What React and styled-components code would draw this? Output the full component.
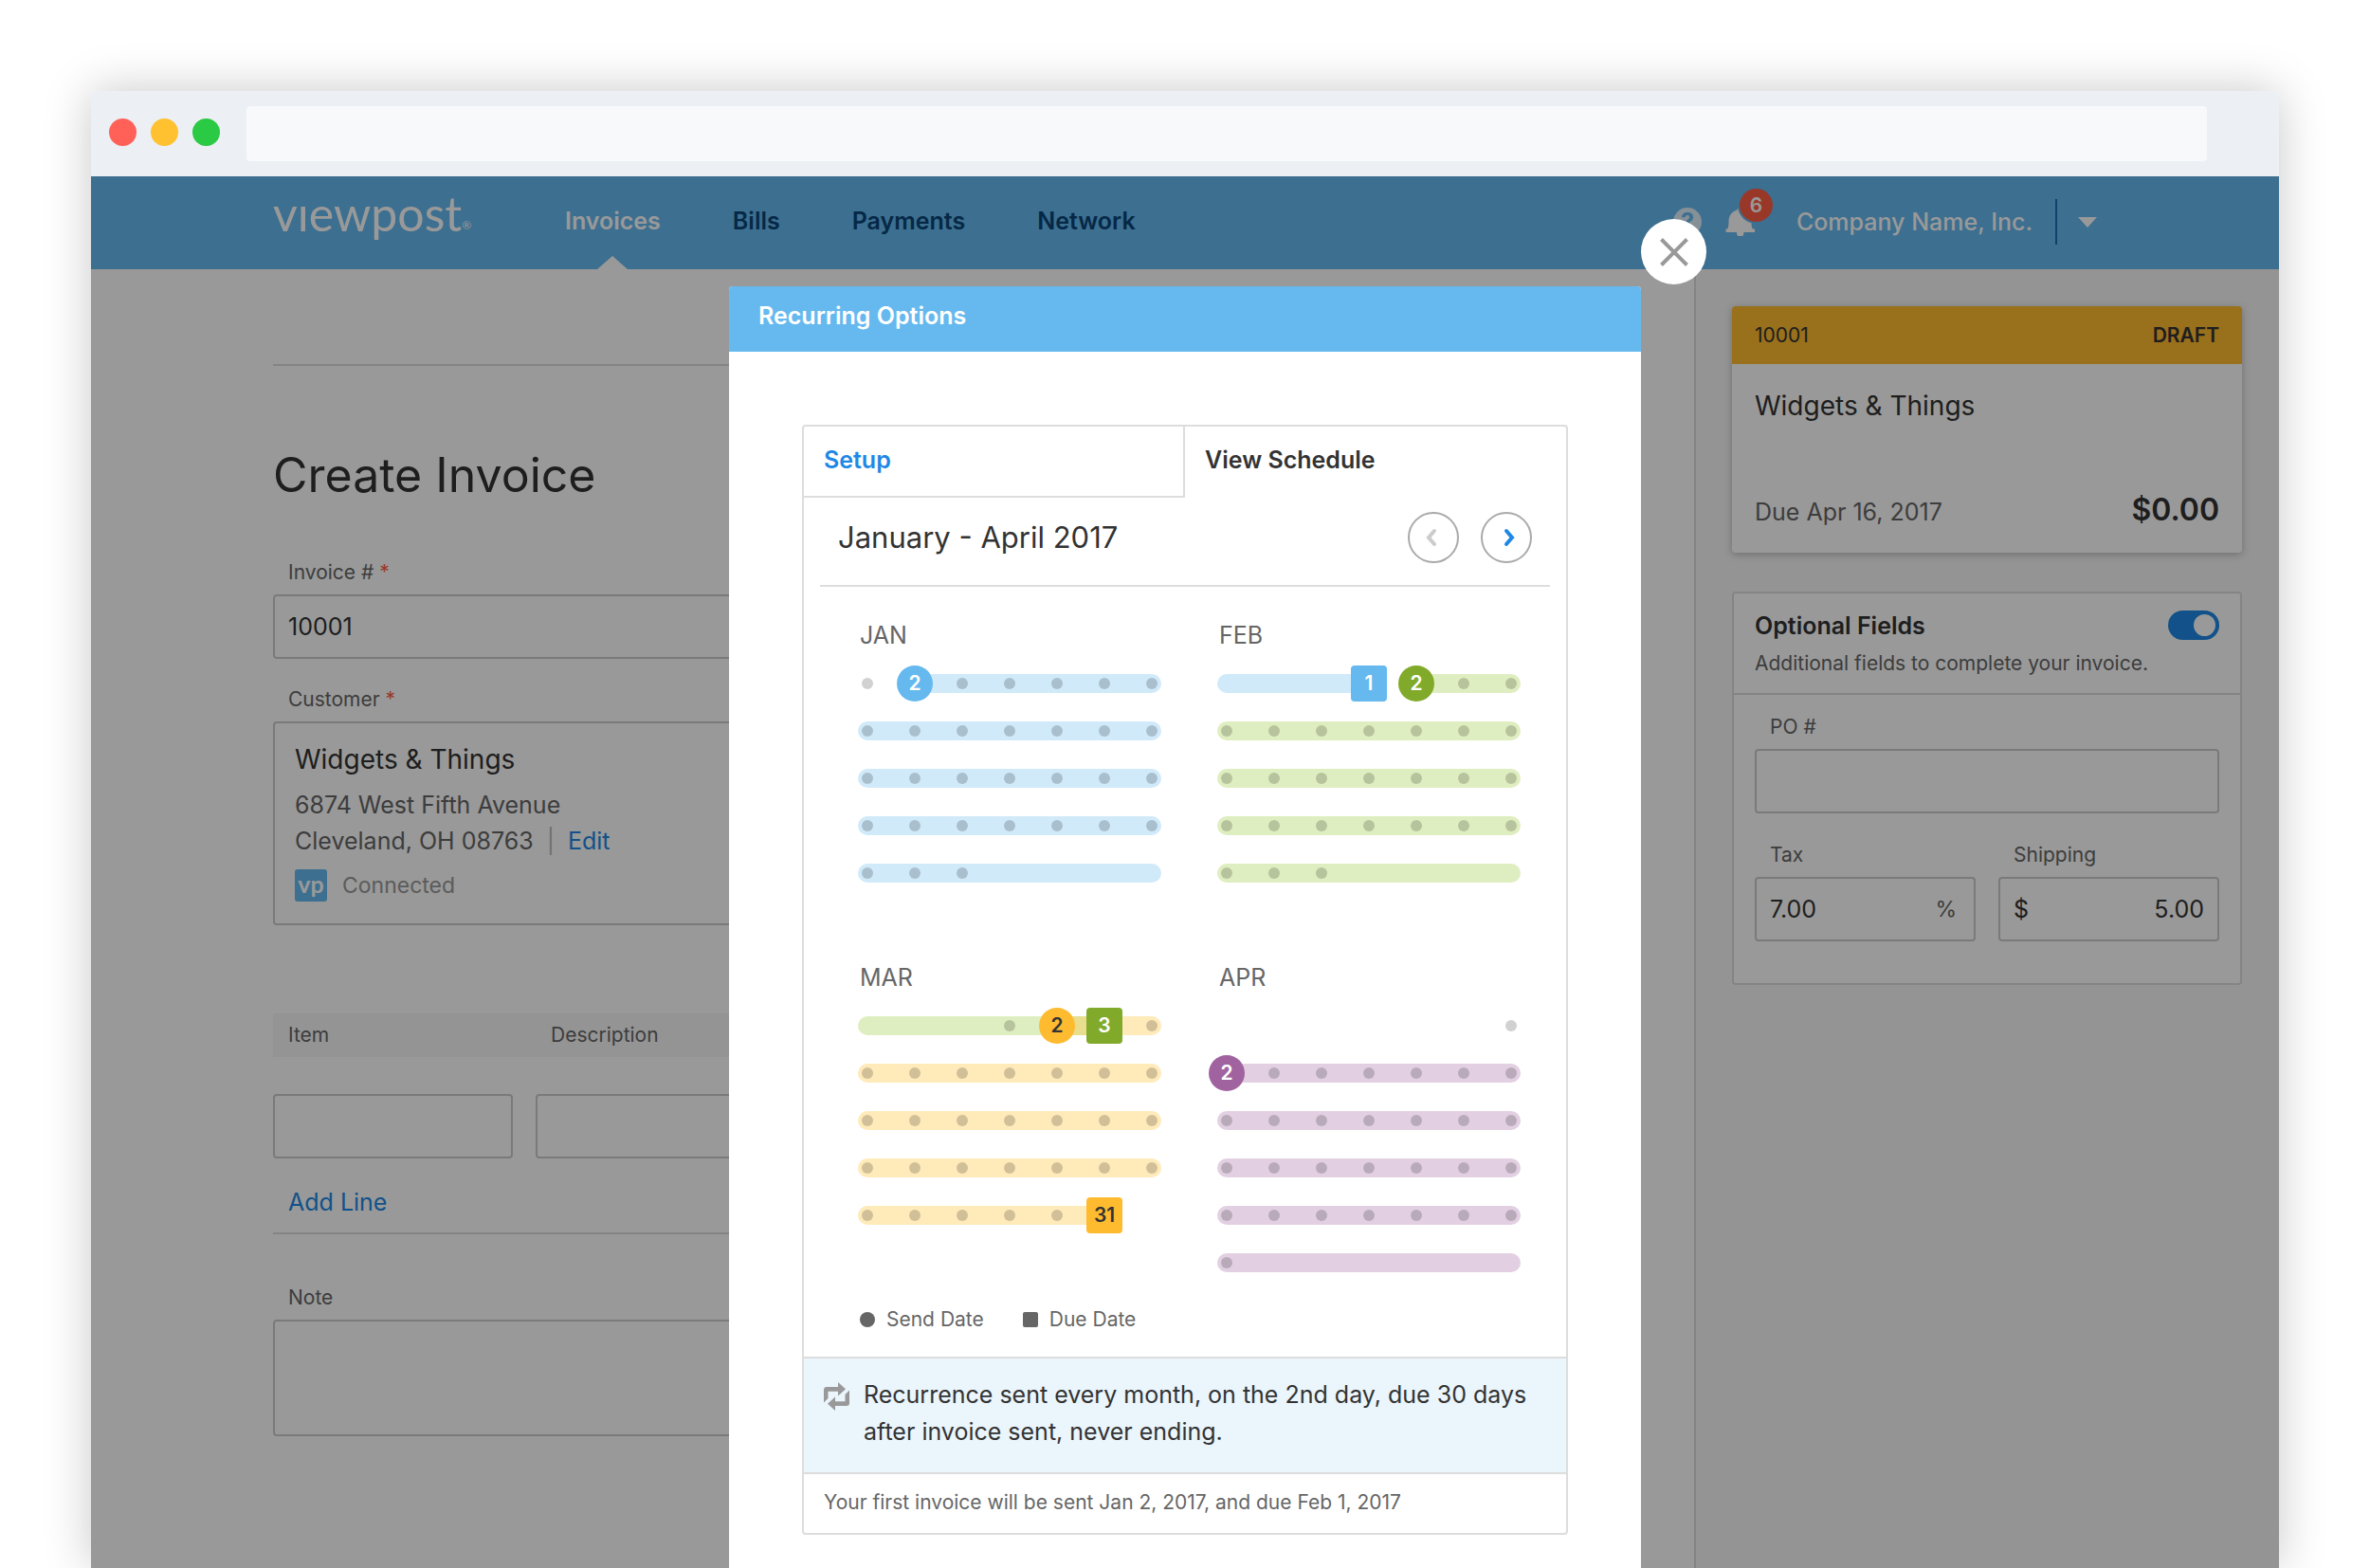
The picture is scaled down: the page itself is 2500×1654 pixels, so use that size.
import React from "react";
import styled, { createGlobalStyle } from "styled-components";

const MONTHS = [
  {
    name: "JAN",
    weeks: [
      { bars: [["blue", 2, 7]], marks: [["blue", "send", 2, 2]], dots: [1, 3, 4, 5, 6, 7] },
      { bars: [["blue", 1, 7]], dots: [1, 2, 3, 4, 5, 6, 7] },
      { bars: [["blue", 1, 7]], dots: [1, 2, 3, 4, 5, 6, 7] },
      { bars: [["blue", 1, 7]], dots: [1, 2, 3, 4, 5, 6, 7] },
      { bars: [["blue", 1, 7]], dots: [1, 2, 3] },
    ],
  },
  {
    name: "FEB",
    weeks: [
      {
        bars: [["blue", 1, 4], ["green", 5, 7]],
        marks: [["blue", "due", 4, 1], ["green", "send", 5, 2]],
        dots: [6, 7],
      },
      { bars: [["green", 1, 7]], dots: [1, 2, 3, 4, 5, 6, 7] },
      { bars: [["green", 1, 7]], dots: [1, 2, 3, 4, 5, 6, 7] },
      { bars: [["green", 1, 7]], dots: [1, 2, 3, 4, 5, 6, 7] },
      { bars: [["green", 1, 7]], dots: [1, 2, 3] },
    ],
  },
  {
    name: "MAR",
    weeks: [
      {
        bars: [["green", 1, 6], ["yellow", 5, 7]],
        marks: [["yellow", "send", 5, 2], ["green", "due", 6, 3]],
        dots: [4, 7],
      },
      { bars: [["yellow", 1, 7]], dots: [1, 2, 3, 4, 5, 6, 7] },
      { bars: [["yellow", 1, 7]], dots: [1, 2, 3, 4, 5, 6, 7] },
      { bars: [["yellow", 1, 7]], dots: [1, 2, 3, 4, 5, 6, 7] },
      { bars: [["yellow", 1, 6]], marks: [["yellow", "due", 6, 31]], dots: [1, 2, 3, 4, 5] },
    ],
  },
  {
    name: "APR",
    weeks: [
      { dots: [7] },
      { bars: [["purple", 1, 7]], marks: [["purple", "send", 1, 2]], dots: [2, 3, 4, 5, 6, 7] },
      { bars: [["purple", 1, 7]], dots: [1, 2, 3, 4, 5, 6, 7] },
      { bars: [["purple", 1, 7]], dots: [1, 2, 3, 4, 5, 6, 7] },
      { bars: [["purple", 1, 7]], dots: [1, 2, 3, 4, 5, 6, 7] },
      { bars: [["purple", 1, 7]], dots: [1] },
    ],
  },
];

const BAR_COLORS = {
  blue: "rgba(101, 185, 240, 0.3)",
  green: "rgba(149, 200, 48, 0.3)",
  yellow: "rgba(255, 184, 26, 0.3)",
  purple: "rgba(160, 99, 160, 0.3)",
};

const MARK_COLORS = {
  blue: "#65b9ee",
  green: "#81aa2b",
  yellow: "#ffbb30",
  purple: "#a063a0",
};

const Month = ({ name, weeks }) => (
  <section>
    <MonthName>{name}</MonthName>
    <Weeks>
      {weeks.map(({ bars = [], marks = [], dots }, index) => (
        <Week key={index}>
          {bars.map(([color, from, to]) => (
            <Bar key={color} $color={color} $from={from} $to={to} />
          ))}
          {dots.map((day) => (
            <Dot key={day} $day={day} />
          ))}
          {marks.map(([color, kind, day, label]) => (
            <Mark key={day} $color={color} $kind={kind} $day={day}>
              {label}
            </Mark>
          ))}
        </Week>
      ))}
    </Weeks>
  </section>
);

const TopBar = () => (
  <Header>
    <Logo href="#home" aria-label="viewpost">
      vıewpost<Registered>®</Registered>
    </Logo>
    <Nav>
      <NavItem href="#invoices" $active>
        Invoices
      </NavItem>
      <NavItem href="#bills">Bills</NavItem>
      <NavItem href="#payments">Payments</NavItem>
      <NavItem href="#network">Network</NavItem>
    </Nav>
    <Account>
      <HelpButton aria-label="Help">?</HelpButton>
      <BellButton aria-label="Notifications">
        <svg width="32" height="30" viewBox="0 0 32 30" fill="#fff">
          <path d="M13.5 0l2 2.500C23 3.200 27.500 8 27.500 14.500c0 3.500.2 5.500 1.200 8H31V26H.5v-3.500h1.800c1-2.500 1.200-4.500 1.200-8C3.500 8.500 7 4 12 2.800z" />
          <path d="M12 25.500h7.500V27a3.700 3.500 0 0 1-7.500 0z" />
        </svg>
        <Badge>6</Badge>
      </BellButton>
      <Company>Company Name, Inc.</Company>
      <MenuButton aria-label="Account menu">
        <svg width="20" height="11" viewBox="0 0 20 11" fill="#fff">
          <path d="M0 0h20L10 11z" />
        </svg>
      </MenuButton>
    </Account>
  </Header>
);

const InvoiceForm = () => (
  <Main>
    <Rule />
    <Title>Create Invoice</Title>
    <Label htmlFor="invoice-number">
      Invoice # <Required>*</Required>
    </Label>
    <Input id="invoice-number" defaultValue="10001" />
    <CustomerLabel>
      Customer <Required>*</Required>
    </CustomerLabel>
    <CustomerBox>
      <CustomerName>Widgets &amp; Things</CustomerName>
      <Address>
        6874 West Fifth Avenue
        <br />
        Cleveland, OH 08763
        <Separator>|</Separator>
        <TextLink href="#edit">Edit</TextLink>
      </Address>
      <Connection>
        <VpIcon>vp</VpIcon>
        Connected
      </Connection>
    </CustomerBox>
    <Items>
      <thead>
        <tr>
          <ItemHead $width="277px">Item</ItemHead>
          <ItemHead>Description</ItemHead>
        </tr>
      </thead>
      <tbody>
        <tr>
          <ItemCell $gap="24px">
            <Input aria-label="Item" />
          </ItemCell>
          <ItemCell>
            <Input aria-label="Description" />
          </ItemCell>
        </tr>
      </tbody>
    </Items>
    <AddLine>Add Line</AddLine>
    <Rule />
    <NoteLabel htmlFor="note">Note</NoteLabel>
    <Note id="note" />
  </Main>
);

const SidePanel = () => (
  <Sidebar>
    <Summary>
      <SummaryHead>
        <span>10001</span>
        <strong>DRAFT</strong>
      </SummaryHead>
      <SummaryBody>
        <CustomerName>Widgets &amp; Things</CustomerName>
        <SummaryTotal>
          <span>Due Apr 16, 2017</span>
          <Amount>$0.00</Amount>
        </SummaryTotal>
      </SummaryBody>
    </Summary>
    <Options>
      <OptionsHead>
        <div>
          <OptionsTitle id="optional">Optional Fields</OptionsTitle>
          <OptionsText>Additional fields to complete your invoice.</OptionsText>
        </div>
        <Toggle type="checkbox" role="switch" aria-labelledby="optional" defaultChecked />
      </OptionsHead>
      <OptionsBody>
        <Label htmlFor="po">PO #</Label>
        <Input id="po" />
        <Pair>
          <div>
            <Label htmlFor="tax">Tax</Label>
            <Affixed>
              <BareInput id="tax" defaultValue="7.00" />
              <Percent>%</Percent>
            </Affixed>
          </div>
          <div>
            <Label htmlFor="shipping">Shipping</Label>
            <Affixed>
              <span>$</span>
              <BareInput id="shipping" defaultValue="5.00" $right />
            </Affixed>
          </div>
        </Pair>
      </OptionsBody>
    </Options>
  </Sidebar>
);

const RecurringDialog = () => (
  <Overlay>
    <Dialog role="dialog" aria-labelledby="dialog-title">
      <CloseButton aria-label="Close">
        <svg width="30" height="30" viewBox="0 0 30 30" stroke="#999" strokeWidth="4">
          <path d="M1.500 1.500l27 27M28.500 1.500l-27 27" />
        </svg>
      </CloseButton>
      <DialogTitle id="dialog-title">Recurring Options</DialogTitle>
      <DialogBody>
        <Panel>
          <Tabs role="tablist">
            <Tab role="tab" aria-selected="false">
              Setup
            </Tab>
            <Tab role="tab" aria-selected="true" $active>
              View Schedule
            </Tab>
          </Tabs>
          <Period>
            <PeriodTitle>January - April 2017</PeriodTitle>
            <RoundButton aria-label="Previous" disabled>
              <Chevron viewBox="0 0 20 20" stroke="#ccc">
                <path d="M11 3L5 10l6 7" />
              </Chevron>
            </RoundButton>
            <RoundButton aria-label="Next">
              <Chevron viewBox="0 0 20 20" stroke="#1e88e5">
                <path d="M10 3l6 7-6 7" />
              </Chevron>
            </RoundButton>
          </Period>
          <Months>
            {MONTHS.map((month) => (
              <Month key={month.name} {...month} />
            ))}
          </Months>
          <Legend>
            <LegendItem>
              <LegendShape $round />
              Send Date
            </LegendItem>
            <LegendItem>
              <LegendShape />
              Due Date
            </LegendItem>
          </Legend>
          <Recurrence>
            <RepeatIcon viewBox="0 0 27 30" fill="#999">
              <path d="M0 21.500V8a3 3 0 0 1 3-3h12V0l8 7.200-8 7.200V9.800H4.500V17z" />
              <path d="M27 8.500V22a3 3 0 0 1-3 3H12v5l-8-7.200 8-7.200v4.600h10.500V13z" />
            </RepeatIcon>
            <p>Recurrence sent every month, on the 2nd day, due 30 days after invoice sent, never ending.</p>
          </Recurrence>
          <FirstInvoice>Your first invoice will be sent Jan 2, 2017, and due Feb 1, 2017</FirstInvoice>
        </Panel>
      </DialogBody>
    </Dialog>
  </Overlay>
);

const App = () => (
  <>
    <GlobalStyle />
    <Page>
      <Browser>
        <Chrome>
          <Lights>
            <Light $color="#ff6159" />
            <Light $color="#ffc12f" />
            <Light $color="#2aca44" />
          </Lights>
          <AddressBar aria-label="Address" />
        </Chrome>
        <Screen>
          <TopBar />
          <Columns>
            <InvoiceForm />
            <SidePanel />
          </Columns>
          <RecurringDialog />
        </Screen>
      </Browser>
    </Page>
  </>
);

const GlobalStyle = createGlobalStyle`
  * {
    box-sizing: border-box;
  }
  body {
    margin: 0;
    background: #fff;
    color: #333;
    font-family: Inter, "Liberation Sans", sans-serif;
    font-size: 25px;
    line-height: 38px;
  }
  h1, h2, h3, p {
    margin: 0;
    font-weight: 400;
  }
  button {
    padding: 0;
    border: 0;
    background: none;
    font: inherit;
    color: inherit;
  }
  a {
    text-decoration: none;
  }
  svg {
    display: block;
  }
`;

const Page = styled.div`
  display: flex;
  min-height: 100vh;
  padding: 96px 96px 0;
  overflow: hidden;
`;

const Browser = styled.div`
  flex: 1;
  display: flex;
  flex-direction: column;
  border-radius: 6px 6px 0 0;
  box-shadow: 0 0 50px rgba(0, 0, 0, 0.22);
`;

const Chrome = styled.div`
  display: flex;
  align-items: center;
  gap: 28px;
  height: 90px;
  padding: 0 76px 0 19px;
  border-radius: 6px 6px 0 0;
  background: #eceff4;
`;

const Lights = styled.div`
  display: flex;
  gap: 15px;
  padding-bottom: 4px;
`;

const Light = styled.span`
  width: 29px;
  height: 29px;
  border-radius: 50%;
  background: ${(p) => p.$color};
`;

const AddressBar = styled.input`
  flex: 1;
  height: 58px;
  border: 0;
  border-radius: 4px;
  background: #f8f9fb;
`;

const Screen = styled.div`
  position: relative;
  flex: 1;
  display: flex;
  flex-direction: column;
  background: #fff;
`;

const Header = styled.header`
  display: flex;
  align-items: stretch;
  height: 98px;
  padding: 0 192px;
  background: #65b9f0;
`;

const Logo = styled.a`
  display: flex;
  width: 308px;
  color: #fff;
  font-family: Lato, sans-serif;
  font-size: 50px;
  line-height: 78px;
`;

const Registered = styled.span`
  font-size: 12px;
  line-height: 104px;
`;

const Nav = styled.nav`
  flex: 1;
  display: flex;
  gap: 76px;
`;

const NavItem = styled.a`
  display: flex;
  flex-direction: column;
  align-items: center;
  color: ${(p) => (p.$active ? "#fff" : "#0a4375")};
  font-weight: 600;
  line-height: 94px;

  &::after {
    content: "";
    margin-top: -10px;
    border: solid transparent;
    border-width: 0 16px 14px;
    border-bottom-color: ${(p) => (p.$active ? "#fff" : "transparent")};
  }
`;

const Account = styled.div`
  display: flex;
  align-items: center;
  padding-bottom: 2px;
`;

const HelpButton = styled.button`
  width: 30px;
  height: 30px;
  margin-right: 25px;
  border-radius: 50%;
  background: #e0f1fc;
  color: #65b9f0;
  font-size: 25px;
  font-weight: 700;
  line-height: 30px;
`;

const BellButton = styled.button`
  position: relative;
  margin-right: 43px;
`;

const Badge = styled.span`
  position: absolute;
  left: 15px;
  top: -20px;
  width: 35px;
  height: 35px;
  border-radius: 50%;
  background: #ff5c43;
  box-shadow: 0 0 0 2px #65b9f0;
  color: #fff;
  font-size: 21px;
  font-weight: 600;
  line-height: 35px;
`;

const Company = styled.span`
  padding-right: 24px;
  border-right: 2px solid #1e6db0;
  color: #fff;
  font-weight: 500;
  line-height: 48px;
`;

const MenuButton = styled.button`
  margin-left: 22px;
`;

const Columns = styled.div`
  flex: 1;
  display: flex;
`;

const Main = styled.main`
  flex: 1;
  padding: 100px 56px 100px 192px;
`;

const Rule = styled.hr`
  height: 2px;
  margin: 0;
  border: 0;
  background: #ddd;
`;

const Title = styled.h1`
  margin: 85px 0 58px;
  font-size: 50px;
  line-height: 60px;
`;

const Label = styled.label`
  display: block;
  margin-bottom: 8px;
  padding-left: 16px;
  color: #666;
  font-size: 21px;
  line-height: 30px;
`;

const CustomerLabel = styled(Label).attrs({ as: "div" })`
  margin-top: 28px;
`;

const NoteLabel = styled(Label)`
  margin-top: 52px;
`;

const Required = styled.span`
  color: #ff5c43;
`;

const Input = styled.input`
  display: block;
  width: 100%;
  height: 68px;
  padding: 0 14px;
  border: 2px solid #ccc;
  border-radius: 4px;
  background: #fff;
  color: #333;
  font: inherit;
`;

const Note = styled(Input).attrs({ as: "textarea" })`
  height: 123px;
  resize: none;
`;

const CustomerBox = styled.div`
  padding: 20px 21px 23px;
  border: 2px solid #ccc;
  border-radius: 4px;
`;

const CustomerName = styled.p`
  font-size: 28px;
  line-height: 36px;
`;

const Address = styled.p`
  margin: 11px 0;
  color: #666;
`;

const Separator = styled.span`
  margin: 0 14px;
  color: #bbb;
`;

const TextLink = styled.a`
  color: #1e88e5;
`;

const Connection = styled.div`
  display: flex;
  align-items: center;
  gap: 16px;
  color: #999;
  font-size: 23px;
  line-height: 34px;
`;

const VpIcon = styled.span`
  width: 34px;
  height: 34px;
  border-radius: 3px;
  background: #65b9f0;
  color: #fff;
  font-family: Lato, sans-serif;
  font-size: 25px;
  font-weight: 700;
  line-height: 30px;
  text-align: center;
`;

const Items = styled.table`
  width: 100%;
  margin-top: 93px;
  border-collapse: collapse;
`;

const ItemHead = styled.th`
  width: ${(p) => p.$width || "auto"};
  height: 46px;
  padding: 0 16px;
  background: #f7f7f7;
  color: #666;
  font-size: 21px;
  font-weight: 400;
  line-height: 30px;
  text-align: left;
`;

const ItemCell = styled.td`
  padding: 39px ${(p) => p.$gap || 0} 0 0;
`;

const AddLine = styled.button`
  display: block;
  margin: 27px 0 13px;
  padding-left: 16px;
  color: #1e88e5;
`;

const Sidebar = styled.aside`
  flex: none;
  width: 617px;
  padding: 39px 39px 39px 38px;
  border-left: 2px solid #ddd;
  background: #f7f7f7;
`;

const Summary = styled.section`
  border-radius: 4px;
  background: #fff;
  box-shadow: 0 2px 8px rgba(0, 0, 0, 0.25);
`;

const SummaryHead = styled.div`
  display: flex;
  justify-content: space-between;
  padding: 0 24px;
  border-radius: 4px 4px 0 0;
  background: #ffbb30;
  font-size: 21px;
  line-height: 61px;

  strong {
    font-weight: 600;
  }
`;

const SummaryBody = styled.div`
  display: flex;
  flex-direction: column;
  gap: 73px;
  padding: 26px 24px 24px;
`;

const SummaryTotal = styled.div`
  display: flex;
  align-items: baseline;
  justify-content: space-between;
  color: #666;
  line-height: 38px;
`;

const Amount = styled.strong`
  color: #333;
  font-size: 32px;
  font-weight: 600;
`;

const Options = styled.section`
  margin-top: 41px;
  border: 2px solid #ddd;
  border-radius: 4px;
  background: #fff;
`;

const OptionsHead = styled.div`
  display: flex;
  justify-content: space-between;
  padding: 15px 22px 16px;
  border-bottom: 2px solid #ddd;
`;

const OptionsTitle = styled.h2`
  font-size: 25px;
  font-weight: 600;
`;

const OptionsText = styled.p`
  margin-top: 6px;
  color: #666;
  font-size: 21px;
  line-height: 30px;
`;

const Toggle = styled.input`
  appearance: none;
  flex: none;
  width: 54px;
  height: 31px;
  margin: 3px 0 0;
  padding: 4px;
  border-radius: 16px;
  background: #1e88e5;

  &::before {
    content: "";
    display: block;
    width: 23px;
    height: 23px;
    margin-left: auto;
    border-radius: 50%;
    background: #fff;
  }
`;

const OptionsBody = styled.div`
  padding: 19px 22px 44px;
`;

const Pair = styled.div`
  display: grid;
  grid-template-columns: repeat(2, minmax(0, 1fr));
  gap: 24px;
  margin-top: 29px;
`;

const Affixed = styled.div`
  display: flex;
  align-items: center;
  height: 68px;
  padding: 0 14px;
  border: 2px solid #ccc;
  border-radius: 4px;
`;

const BareInput = styled.input`
  flex: 1;
  min-width: 0;
  padding: 0;
  border: 0;
  background: none;
  color: #333;
  font: inherit;
  text-align: ${(p) => (p.$right ? "right" : "left")};
`;

const Percent = styled.span`
  padding-right: 4px;
  color: #666;
  font-size: 23px;
`;

const Overlay = styled.div`
  position: absolute;
  inset: 0;
  display: flex;
  justify-content: center;
  padding-top: 116px;
  background: rgba(0, 0, 0, 0.4);
`;

const Dialog = styled.div`
  position: relative;
  width: 962px;
  border-radius: 4px 4px 0 0;
  background: #fff;
`;

const CloseButton = styled.button`
  position: absolute;
  left: 100%;
  top: -71px;
  display: flex;
  align-items: center;
  justify-content: center;
  width: 69px;
  height: 69px;
  border-radius: 50%;
  background: #fff;
`;

const DialogTitle = styled.h2`
  padding: 0 31px 6px;
  border-radius: 4px 4px 0 0;
  background: #65b9ee;
  color: #fff;
  font-size: 25px;
  font-weight: 600;
  line-height: 63px;
`;

const DialogBody = styled.div`
  padding: 77px 77px 0;
`;

const Panel = styled.div`
  border: 2px solid #ddd;
  border-radius: 4px;
`;

const Tabs = styled.div`
  display: grid;
  grid-template-columns: 1fr 1fr;
`;

const Tab = styled.button`
  padding: 16px 21px 19px;
  border: solid ${(p) => (p.$active ? "transparent" : "#ddd")};
  border-width: 0 2px 2px 0;
  color: ${(p) => (p.$active ? "#333" : "#1e88e5")};
  font-weight: 600;
  text-align: left;
`;

const Period = styled.div`
  display: flex;
  align-items: center;
  gap: 23px;
  margin: 0 17px;
  padding: 15px 19px 23px;
  border-bottom: 2px solid #ddd;
`;

const PeriodTitle = styled.h3`
  flex: 1;
  font-size: 31px;
`;

const RoundButton = styled.button`
  display: flex;
  align-items: center;
  justify-content: center;
  width: 54px;
  height: 54px;
  border: 2px solid #aaa;
  border-radius: 50%;
`;

const Chevron = styled.svg`
  width: 20px;
  height: 20px;
  fill: none;
  stroke-width: 4;
  stroke-linecap: round;
`;

const Months = styled.div`
  display: grid;
  grid-template-columns: 320px 320px;
  gap: 35px 59px;
  padding: 36px 0 0 57px;
`;

const MonthName = styled.h3`
  padding-left: 2px;
  color: #666;
  font-size: 25px;
  line-height: 30px;
`;

const Weeks = styled.div`
  display: flex;
  flex-direction: column;
  gap: 30px;
  min-height: 270px;
  margin-top: 26px;
`;

const Week = styled.div`
  display: grid;
  grid-template-columns: repeat(7, 20px);
  grid-template-rows: 20px;
  column-gap: 30px;
`;

const Bar = styled.span`
  grid-row: 1;
  grid-column: ${(p) => `${p.$from} / ${p.$to + 1}`};
  border-radius: 10px;
  background: ${(p) => BAR_COLORS[p.$color]};
`;

const Dot = styled.span`
  grid-row: 1;
  grid-column: ${(p) => p.$day};
  place-self: center;
  width: 12px;
  height: 12px;
  border-radius: 50%;
  background: rgba(0, 0, 0, 0.18);
`;

const Mark = styled.span`
  grid-row: 1;
  grid-column: ${(p) => p.$day};
  place-self: center;
  width: 38px;
  height: 38px;
  border-radius: ${(p) => (p.$kind === "send" ? "50%" : "4px")};
  background: ${(p) => MARK_COLORS[p.$color]};
  color: ${(p) => (p.$color === "yellow" ? "#333" : "#fff")};
  font-size: 21px;
  font-weight: 600;
  line-height: 38px;
  text-align: center;
`;

const Legend = styled.div`
  display: flex;
  gap: 41px;
  padding: 35px 59px 24px;
  color: #666;
  font-size: 21px;
  line-height: 30px;
`;

const LegendItem = styled.div`
  display: flex;
  align-items: center;
  gap: 12px;
`;

const LegendShape = styled.span`
  width: 16px;
  height: 16px;
  border-radius: ${(p) => (p.$round ? "50%" : "2px")};
  background: #666;
`;

const Recurrence = styled.div`
  display: flex;
  gap: 15px;
  padding: 19px 21px 23px;
  border: solid #ddd;
  border-width: 2px 0;
  background: #eaf5fc;
  line-height: 39px;
`;

const RepeatIcon = styled.svg`
  flex: none;
  width: 27px;
  height: 30px;
  margin-top: 6px;
`;

const FirstInvoice = styled.p`
  padding: 15px 21px 17px;
  color: #666;
  font-size: 21px;
  line-height: 30px;
`;

export default App;
